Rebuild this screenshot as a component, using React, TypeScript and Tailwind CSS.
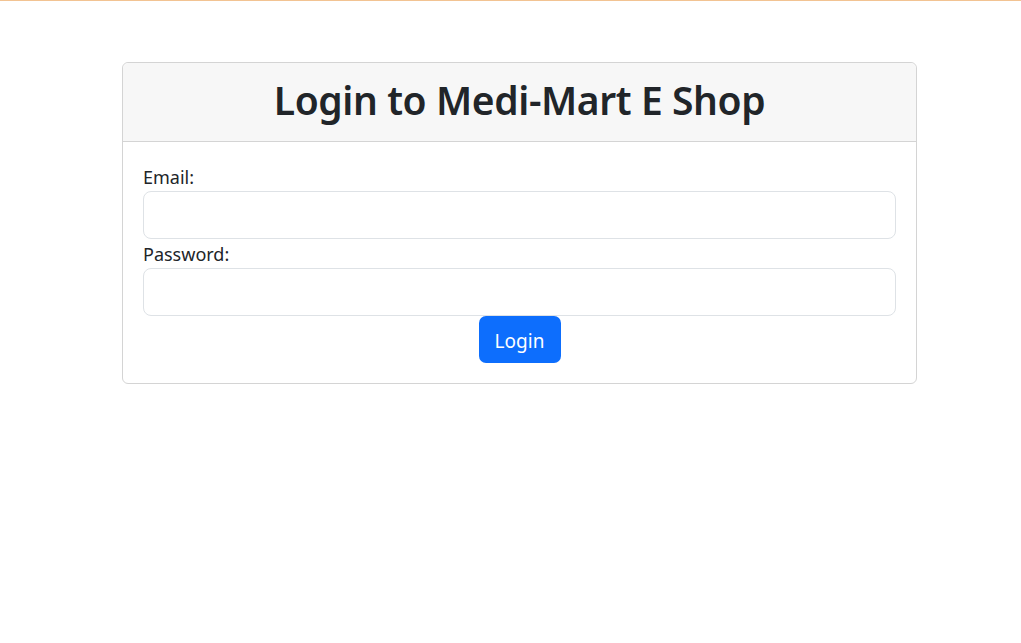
const App = () => {
  return (
    <div className="min-h-[643px] bg-white text-[#212529]" style={{ fontFamily: '"Noto Sans", "Open Sans", sans-serif' }}>
      <div className="h-px bg-[#f2c392]" />
      <div className="pt-[61px]">
        <div className="ml-[122px] w-[795px] rounded-[6px] border border-[#d4d4d4]">
          <div className="flex h-[79px] items-center justify-center rounded-t-[6px] border-b border-[#d4d4d4] bg-[#f7f7f7] pb-[5px]">
            <h1 className="text-[39px] font-semibold leading-none tracking-[-0.4px]">Login to Medi-Mart E Shop</h1>
          </div>
          <form className="flex flex-col px-[20px] pt-[21px] pb-[20px]">
            <label className="h-[28px] text-[18px] leading-[28px]">Email:</label>
            <input type="email" className="h-[48px] w-full rounded-[8px] border border-[#dee2e6] px-4 text-[20px] outline-none" />
            <label className="mt-[1px] h-[28px] text-[18px] leading-[28px]">Password:</label>
            <input type="password" className="h-[48px] w-full rounded-[8px] border border-[#dee2e6] px-4 text-[20px] outline-none" />
            <div className="flex justify-center">
              <button type="button" className="h-[47px] w-[82px] rounded-[7px] bg-[#0d6efd] pt-[3px] text-[19px] text-white">
                Login
              </button>
            </div>
          </form>
        </div>
      </div>
    </div>
  );
};

export default App;
